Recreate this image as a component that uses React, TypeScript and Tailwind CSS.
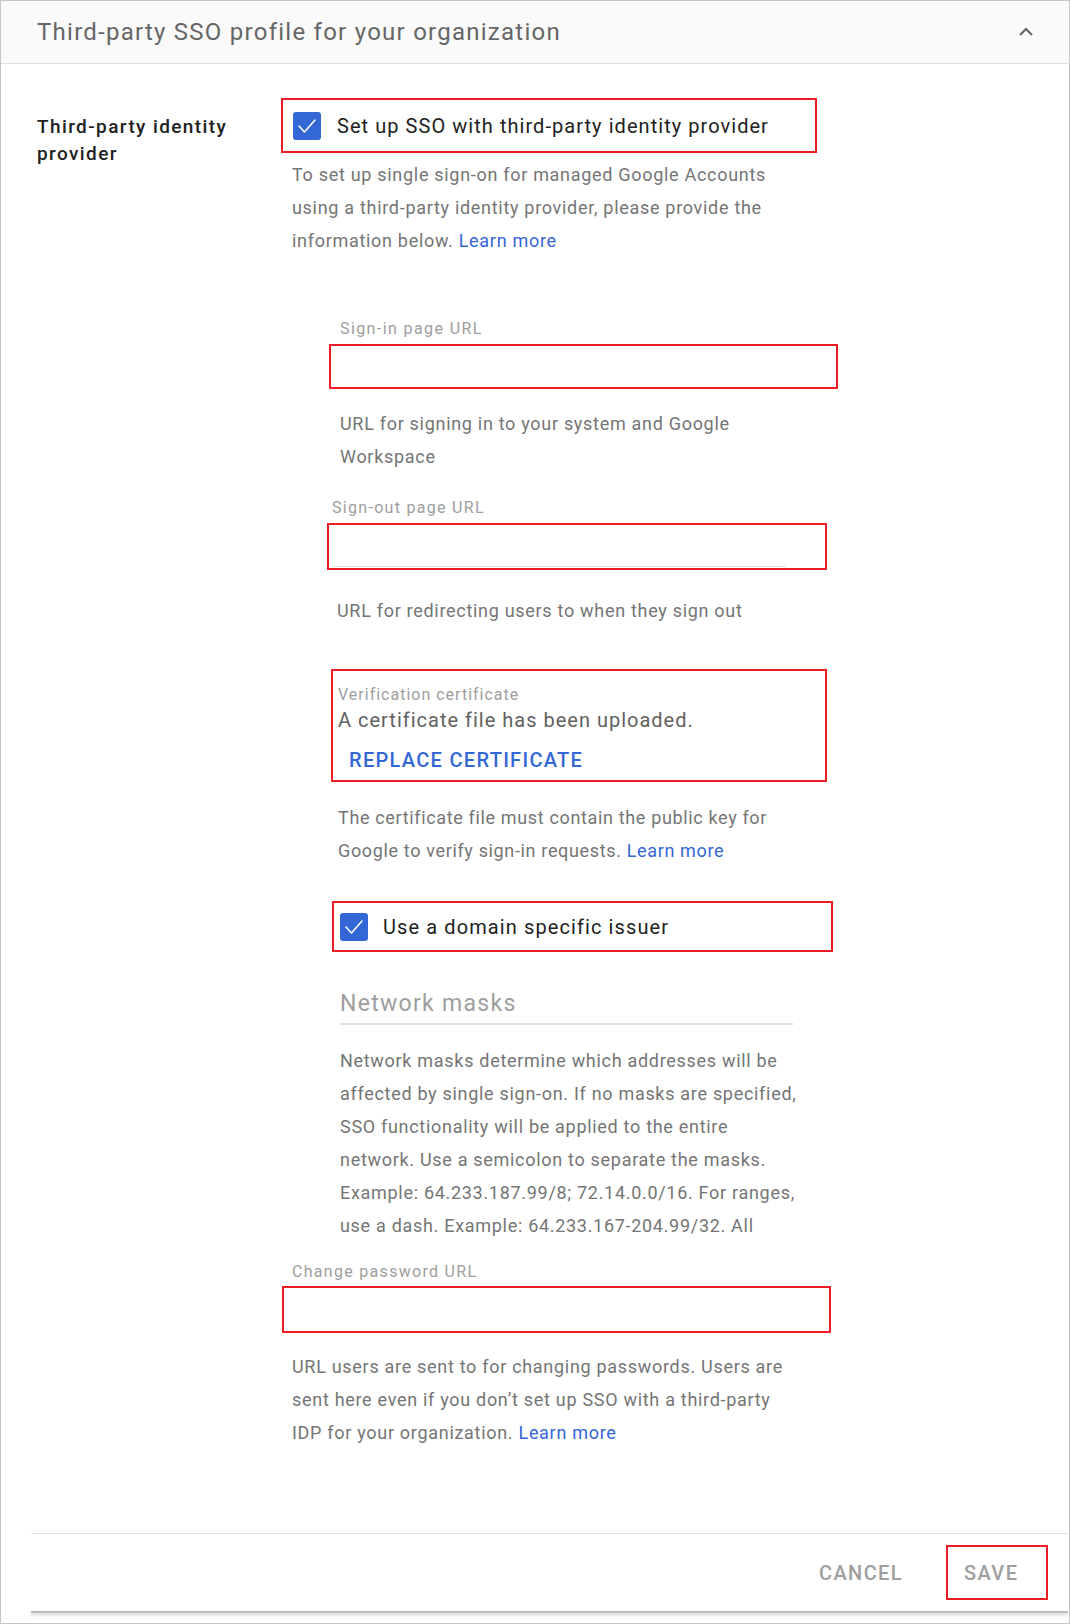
import React from "react";

function CheckBox() {
    return (
        <div className="w-[28px] h-[28px] rounded-[3px] bg-[#3367d6] flex items-center justify-center shrink-0">
            <svg width="22" height="18" viewBox="0 0 22 18" fill="none">
                <polyline points="3,9 8.5,15 19,3" stroke="#ffffff" strokeWidth="1.5" fill="none" strokeLinecap="round" strokeLinejoin="round" />
            </svg>
        </div>
    );
}

function LearnMore() {
    return <a className="text-[#3367d6] cursor-pointer">Learn more</a>;
}

export default function App() {
    return (
        <div className="w-[1070px] h-[1624px] bg-white font-['Roboto',sans-serif] border-l border-r border-t border-b border-[#c6c6c6] overflow-hidden">
            {/* Header */}
            <div className="h-[63px] bg-[#fafafa] border-b border-[#e0e0e0] flex items-center justify-between pl-[36px] pr-[35px]">
                <div className="text-[24px] tracking-[1.25px] text-[#666666] leading-[30px]">Third-party SSO profile for your organization</div>
                <svg width="16" height="10" viewBox="0 0 16 10" fill="none">
                    <polyline points="2,8 8,2 14,8" stroke="#5f6368" strokeWidth="2" fill="none" />
                </svg>
            </div>

            {/* Body */}
            <div className="flex pt-[34px] h-[1385px]">
                <div className="w-[291px] pl-[36px] pt-[15px] shrink-0">
                    <div className="text-[19px] tracking-[1.4px] font-medium leading-[27px] text-[#212121] w-[220px]">
                        Third-party identity provider
                    </div>
                </div>

                <div className="flex flex-col">
                    <div className="-ml-[11px] w-[536px] h-[55px] border-2 border-[#ed1c24] flex items-center pl-[10px] gap-[16px]">
                        <CheckBox />
                        <span className="text-[20px] tracking-[1.05px] text-[#212121]">Set up SSO with third-party identity provider</span>
                    </div>

                    <p className="mt-[5px] w-[490px] text-[18px] tracking-[0.7px] leading-[33px] text-[#757575]">
                        To set up single sign-on for managed Google Accounts using a third-party identity provider, please provide the information below. <LearnMore />
                    </p>

                    {/* Sign-in */}
                    <div className="ml-[48px] mt-[62px] text-[16px] tracking-[1.4px] leading-[20px] text-[#9e9e9e]">Sign-in page URL</div>
                    <div className="ml-[37px] mt-[5px] w-[509px] h-[45px] border-2 border-[#ed1c24]"></div>
                    <p className="ml-[48px] mt-[18px] w-[440px] text-[18px] tracking-[0.7px] leading-[33px] text-[#757575]">
                        URL for signing in to your system and Google Workspace
                    </p>

                    {/* Sign-out */}
                    <div className="ml-[40px] mt-[25px] text-[16px] tracking-[1.3px] leading-[20px] text-[#9e9e9e]">Sign-out page URL</div>
                    <div className="ml-[35px] mt-[5px] w-[500px] h-[47px] border-2 border-[#ed1c24] flex flex-col justify-end pb-[1px]">
                        <div className="ml-[4px] w-[453px] h-[1px] bg-[#e0e0e0]"></div>
                    </div>
                    <p className="ml-[45px] mt-[24px] text-[18px] tracking-[0.7px] leading-[33px] text-[#757575]">
                        URL for redirecting users to when they sign out
                    </p>

                    {/* Certificate */}
                    <div className="ml-[39px] mt-[42px] w-[496px] h-[113px] border-2 border-[#ed1c24] flex flex-col pl-[5px] pt-[14px]">
                        <div className="text-[16px] tracking-[1px] leading-[20px] text-[#9e9e9e]">Verification certificate</div>
                        <div className="mt-[2px] text-[20px] tracking-[1px] leading-[26px] text-[#616161]">A certificate file has been uploaded.</div>
                        <div className="mt-[14px] ml-[11px] text-[20px] tracking-[1.3px] leading-[26px] font-medium text-[#3367d6]">REPLACE CERTIFICATE</div>
                    </div>
                    <p className="ml-[46px] mt-[19px] w-[450px] text-[18px] tracking-[0.65px] leading-[33px] text-[#757575]">
                        The certificate file must contain the public key for Google to verify sign-in requests. <LearnMore />
                    </p>

                    {/* Domain specific issuer */}
                    <div className="ml-[40px] mt-[34px] w-[501px] h-[51px] border-2 border-[#ed1c24] flex items-center pl-[6px] gap-[15px]">
                        <CheckBox />
                        <span className="text-[20px] tracking-[1.1px] text-[#212121]">Use a domain specific issuer</span>
                    </div>

                    {/* Network masks */}
                    <div className="ml-[48px] mt-[38px] text-[23px] tracking-[1.3px] leading-[28px] text-[#9e9e9e]">Network masks</div>
                    <div className="ml-[48px] mt-[5px] w-[453px] h-[2px] bg-[#e0e0e0]"></div>
                    <div className="ml-[48px] mt-[19px] w-[462px] h-[198px] overflow-hidden">
                        <p className="text-[18px] tracking-[0.7px] leading-[33px] text-[#757575]">
                            Network masks determine which addresses will be affected by single sign-on. If no masks are specified, SSO functionality will be applied to the entire network. Use a semicolon to separate the masks. Example: 64.233.187.99/8; 72.14.0.0/16. For ranges, use a dash. Example: 64.233.167-204.99/32. All network masks must end with a CIDR.
                        </p>
                    </div>

                    {/* Change password */}
                    <div className="mt-[20px] text-[16px] tracking-[1.3px] leading-[20px] text-[#9e9e9e]">Change password URL</div>
                    <div className="-ml-[10px] mt-[4px] w-[549px] h-[47px] border-2 border-[#ed1c24]"></div>
                    <p className="mt-[17px] w-[500px] text-[18px] tracking-[0.7px] leading-[33px] text-[#757575]">
                        URL users are sent to for changing passwords. Users are sent here even if you don’t set up SSO with a third-party IDP for your organization. <LearnMore />
                    </p>
                </div>
            </div>

            {/* Footer */}
            <div className="ml-[30px] mr-[1px] border-t border-[#e0e0e0] mt-[84px]">
                <div className="flex justify-end items-center pt-[11px] pr-[20px] gap-[43px]">
                    <button className="text-[20px] tracking-[1.4px] font-medium text-[#9e9e9e]">CANCEL</button>
                    <div className="w-[102px] h-[55px] border-2 border-[#ed1c24] flex items-center justify-start pl-[16px]">
                        <button className="text-[20px] tracking-[1.4px] font-medium text-[#9e9e9e]">SAVE</button>
                    </div>
                </div>
                <div className="mt-[11px] h-[2px] bg-[#bdbdbd] shadow-[0_2px_3px_rgba(0,0,0,0.2)]"></div>
            </div>
        </div>
    );
}
